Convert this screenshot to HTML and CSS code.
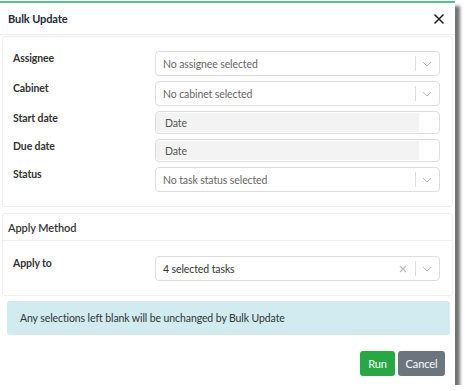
FILE: index.html
```html
<!DOCTYPE html>
<html>
<head>
<meta charset="utf-8">
<link rel="stylesheet" href="styles.css">
</head>
<body>
<div class="modal">
  <div class="modal-header">
    <span class="modal-title">Bulk Update</span>
    <svg class="close" width="12" height="12" viewBox="0 0 12 12"><path d="M1.5 1.5 L10.5 10.5 M10.5 1.5 L1.5 10.5" stroke="#222" stroke-width="1.5" fill="none"/></svg>
  </div>
  <div class="modal-body">
    <div class="card">
      <div class="card-body first">
        <div class="row">
          <label class="lbl">Assignee</label>
          <div class="select"><span class="ph">No assignee selected</span><span class="ind"><span class="sep"></span><svg class="chev" width="10" height="6" viewBox="0 0 10 6"><path d="M1 1 L5 5 L9 1" stroke="#bbb" stroke-width="1" fill="none"/></svg></span></div>
        </div>
        <div class="row">
          <label class="lbl">Cabinet</label>
          <div class="select"><span class="ph">No cabinet selected</span><span class="ind"><span class="sep"></span><svg class="chev" width="10" height="6" viewBox="0 0 10 6"><path d="M1 1 L5 5 L9 1" stroke="#bbb" stroke-width="1" fill="none"/></svg></span></div>
        </div>
        <div class="row">
          <label class="lbl">Start date</label>
          <div class="date"><span class="date-fill">Date</span></div>
        </div>
        <div class="row">
          <label class="lbl">Due date</label>
          <div class="date"><span class="date-fill">Date</span></div>
        </div>
        <div class="row last">
          <label class="lbl">Status</label>
          <div class="select"><span class="ph">No task status selected</span><span class="ind"><span class="sep"></span><svg class="chev" width="10" height="6" viewBox="0 0 10 6"><path d="M1 1 L5 5 L9 1" stroke="#bbb" stroke-width="1" fill="none"/></svg></span></div>
        </div>
      </div>
    </div>
    <div class="card card2">
      <div class="card-header">Apply Method</div>
      <div class="card-body">
        <div class="row last">
          <label class="lbl">Apply to</label>
          <div class="select"><span class="val">4 selected tasks</span><span class="ind"><svg class="clear" width="8" height="8" viewBox="0 0 8 8"><path d="M1 1 L7 7 M7 1 L1 7" stroke="#bbb" stroke-width="1.2" fill="none"/></svg><span class="sep"></span><svg class="chev" width="10" height="6" viewBox="0 0 10 6"><path d="M1 1 L5 5 L9 1" stroke="#bbb" stroke-width="1" fill="none"/></svg></span></div>
        </div>
      </div>
    </div>
    <div class="alert">Any selections left blank will be unchanged by Bulk Update</div>
  </div>
  <div class="modal-footer">
    <button class="btn btn-run">Run</button>
    <button class="btn btn-cancel">Cancel</button>
  </div>
</div>
</body>
</html>
```

FILE: styles.css
```css
* { box-sizing: border-box; }
body {
  margin: 0;
  background: #fff;
  font-family: "Lato", "Open Sans", sans-serif;
  font-size: 10.5px;
  letter-spacing: -0.1px;
  color: #333;
}
.modal {
  width: 455px;
  height: 384px;
  margin-top: 1px;
  background: #fff;
  border-top: 2px solid #5cbf8e;
  box-shadow: 5px 5px 3px rgba(0,0,0,0.55);
  display: flex;
  flex-direction: column;
}
.modal-header {
  height: 32px;
  display: flex;
  align-items: center;
  justify-content: space-between;
  padding: 0 10px 0 8px;
  border-bottom: 1px solid #eee;
}
.modal-title {
  font-weight: 700;
  font-size: 11px;
  color: #1d2a3a;
}
.modal-body {
  padding: 0 2px;
}
.card {
  border: 1px solid #eee;
  border-radius: 3px;
  margin-top: 1px;
}
.card2 { margin-top: 6px; }
.card-body {
  padding: 15px 12px 14px 10px;
}
.card-body.first { padding-top: 14px; }
.card-header {
  height: 27px;
  display: flex;
  align-items: center;
  padding-left: 5px;
  border-bottom: 1px solid #eee;
  font-weight: 600;
  font-size: 11px;
  color: #333;
}
.row {
  display: flex;
  align-items: flex-start;
  margin-bottom: 5px;
}
.row.last { margin-bottom: 0; }
.lbl {
  width: 142px;
  font-weight: 700;
  font-size: 10.5px;
  color: #333;
  line-height: 14px;
  padding-top: 0;
}
.select, .date {
  flex: 1;
  border: 1px solid #ddd;
  border-radius: 4px;
  display: flex;
  align-items: center;
}
.select {
  height: 25px;
  padding-left: 7px;
}
.date {
  height: 23px;
  padding: 1px 20px 1px 0;
}
.date-fill {
  flex: 1;
  height: 100%;
  background: #f3f3f3;
  display: flex;
  align-items: center;
  padding-left: 9px;
  color: #555;
}
.ph { flex: 1; color: #666; }
.val { flex: 1; color: #333; }
.ind {
  display: flex;
  align-items: center;
  height: 100%;
}
.sep {
  width: 1px;
  height: 15px;
  background: #ddd;
  margin: 0 6px 0 0;
}
.chev { margin-right: 7px; }
.clear { margin-right: 8px; }
.alert {
  margin: 5px 3px 0 5px;
  height: 34px;
  background: #d1ebf0;
  border-radius: 3px;
  display: flex;
  align-items: center;
  padding-left: 13px;
  color: #333;
}
.modal-footer {
  display: flex;
  justify-content: flex-end;
  gap: 3px;
  padding: 16px 10px 0 0;
}
.btn {
  height: 25px;
  border: none;
  border-radius: 3px;
  color: #fff;
  font-family: inherit;
  font-size: 11px;
  letter-spacing: -0.1px;
  padding: 0 4px;
}
.btn-run { background: #28a745; width: 35px; }
.btn-cancel { background: #6c757d; width: 47px; }
```
